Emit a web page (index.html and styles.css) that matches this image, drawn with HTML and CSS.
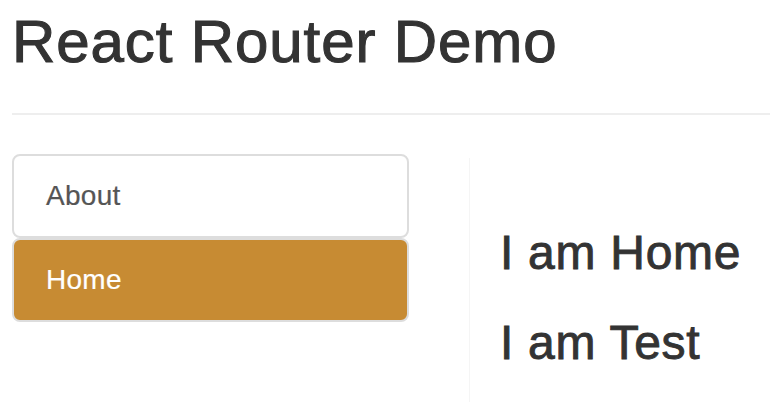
FILE: index.html
```html
<!DOCTYPE html>
<html>
<head>
<meta charset="utf-8">
<link rel="stylesheet" href="styles.css">
</head>
<body>
<div class="container">
  <div class="page-header">
    <h2 class="title">React Router Demo</h2>
  </div>
  <div class="row">
    <div class="sidebar">
      <a class="list-item" href="#">About</a>
      <a class="list-item active" href="#">Home</a>
    </div>
    <div class="content">
      <h3 class="heading">I am Home</h3>
      <h3 class="heading">I am Test</h3>
    </div>
  </div>
</div>
</body>
</html>
```

FILE: styles.css
```css
* { box-sizing: border-box; }
html, body {
  margin: 0;
  padding: 0;
  background: #fff;
  overflow: hidden;
}
body {
  font-family: "Liberation Sans", Arial, sans-serif;
  color: #333;
  width: 770px;
  height: 402px;
}
.container {
  padding: 9px 0 0 12px;
}
.page-header {
  border-bottom: 2px solid #eee;
  padding-bottom: 18px;
  margin: 0 0 39px 0;
}
.title {
  margin: 0 0 20px 0;
  font-size: 60px;
  line-height: 66px;
  font-weight: 400;
  letter-spacing: 0.015em;
  -webkit-text-stroke: 1.1px #333;
  color: #333;
}
.row {
  display: flex;
  align-items: flex-start;
}
.sidebar {
  width: 397px;
  display: flex;
  flex-direction: column;
}
.list-item {
  display: block;
  height: 84px;
  padding: 20px 32px;
  border: 2px solid #ddd;
  border-radius: 8px;
  font-size: 28px;
  line-height: 40px;
  letter-spacing: 0.01em;
  color: #555;
  text-decoration: none;
  background: #fff;
  -webkit-text-stroke: 0.2px currentColor;
}
.list-item.active {
  background: #c78b33;
  color: #fff;
}
.content {
  margin-left: 60px;
  margin-top: 4px;
  border-left: 1px solid #f5f5f5;
  padding: 69px 0 0 30px;
  height: 244px;
  flex: 1;
}
.heading {
  margin: 0 0 37px 0;
  font-size: 48px;
  line-height: 52.8px;
  font-weight: 400;
  letter-spacing: 0.015em;
  -webkit-text-stroke: 0.9px #333;
  color: #333;
}
```
